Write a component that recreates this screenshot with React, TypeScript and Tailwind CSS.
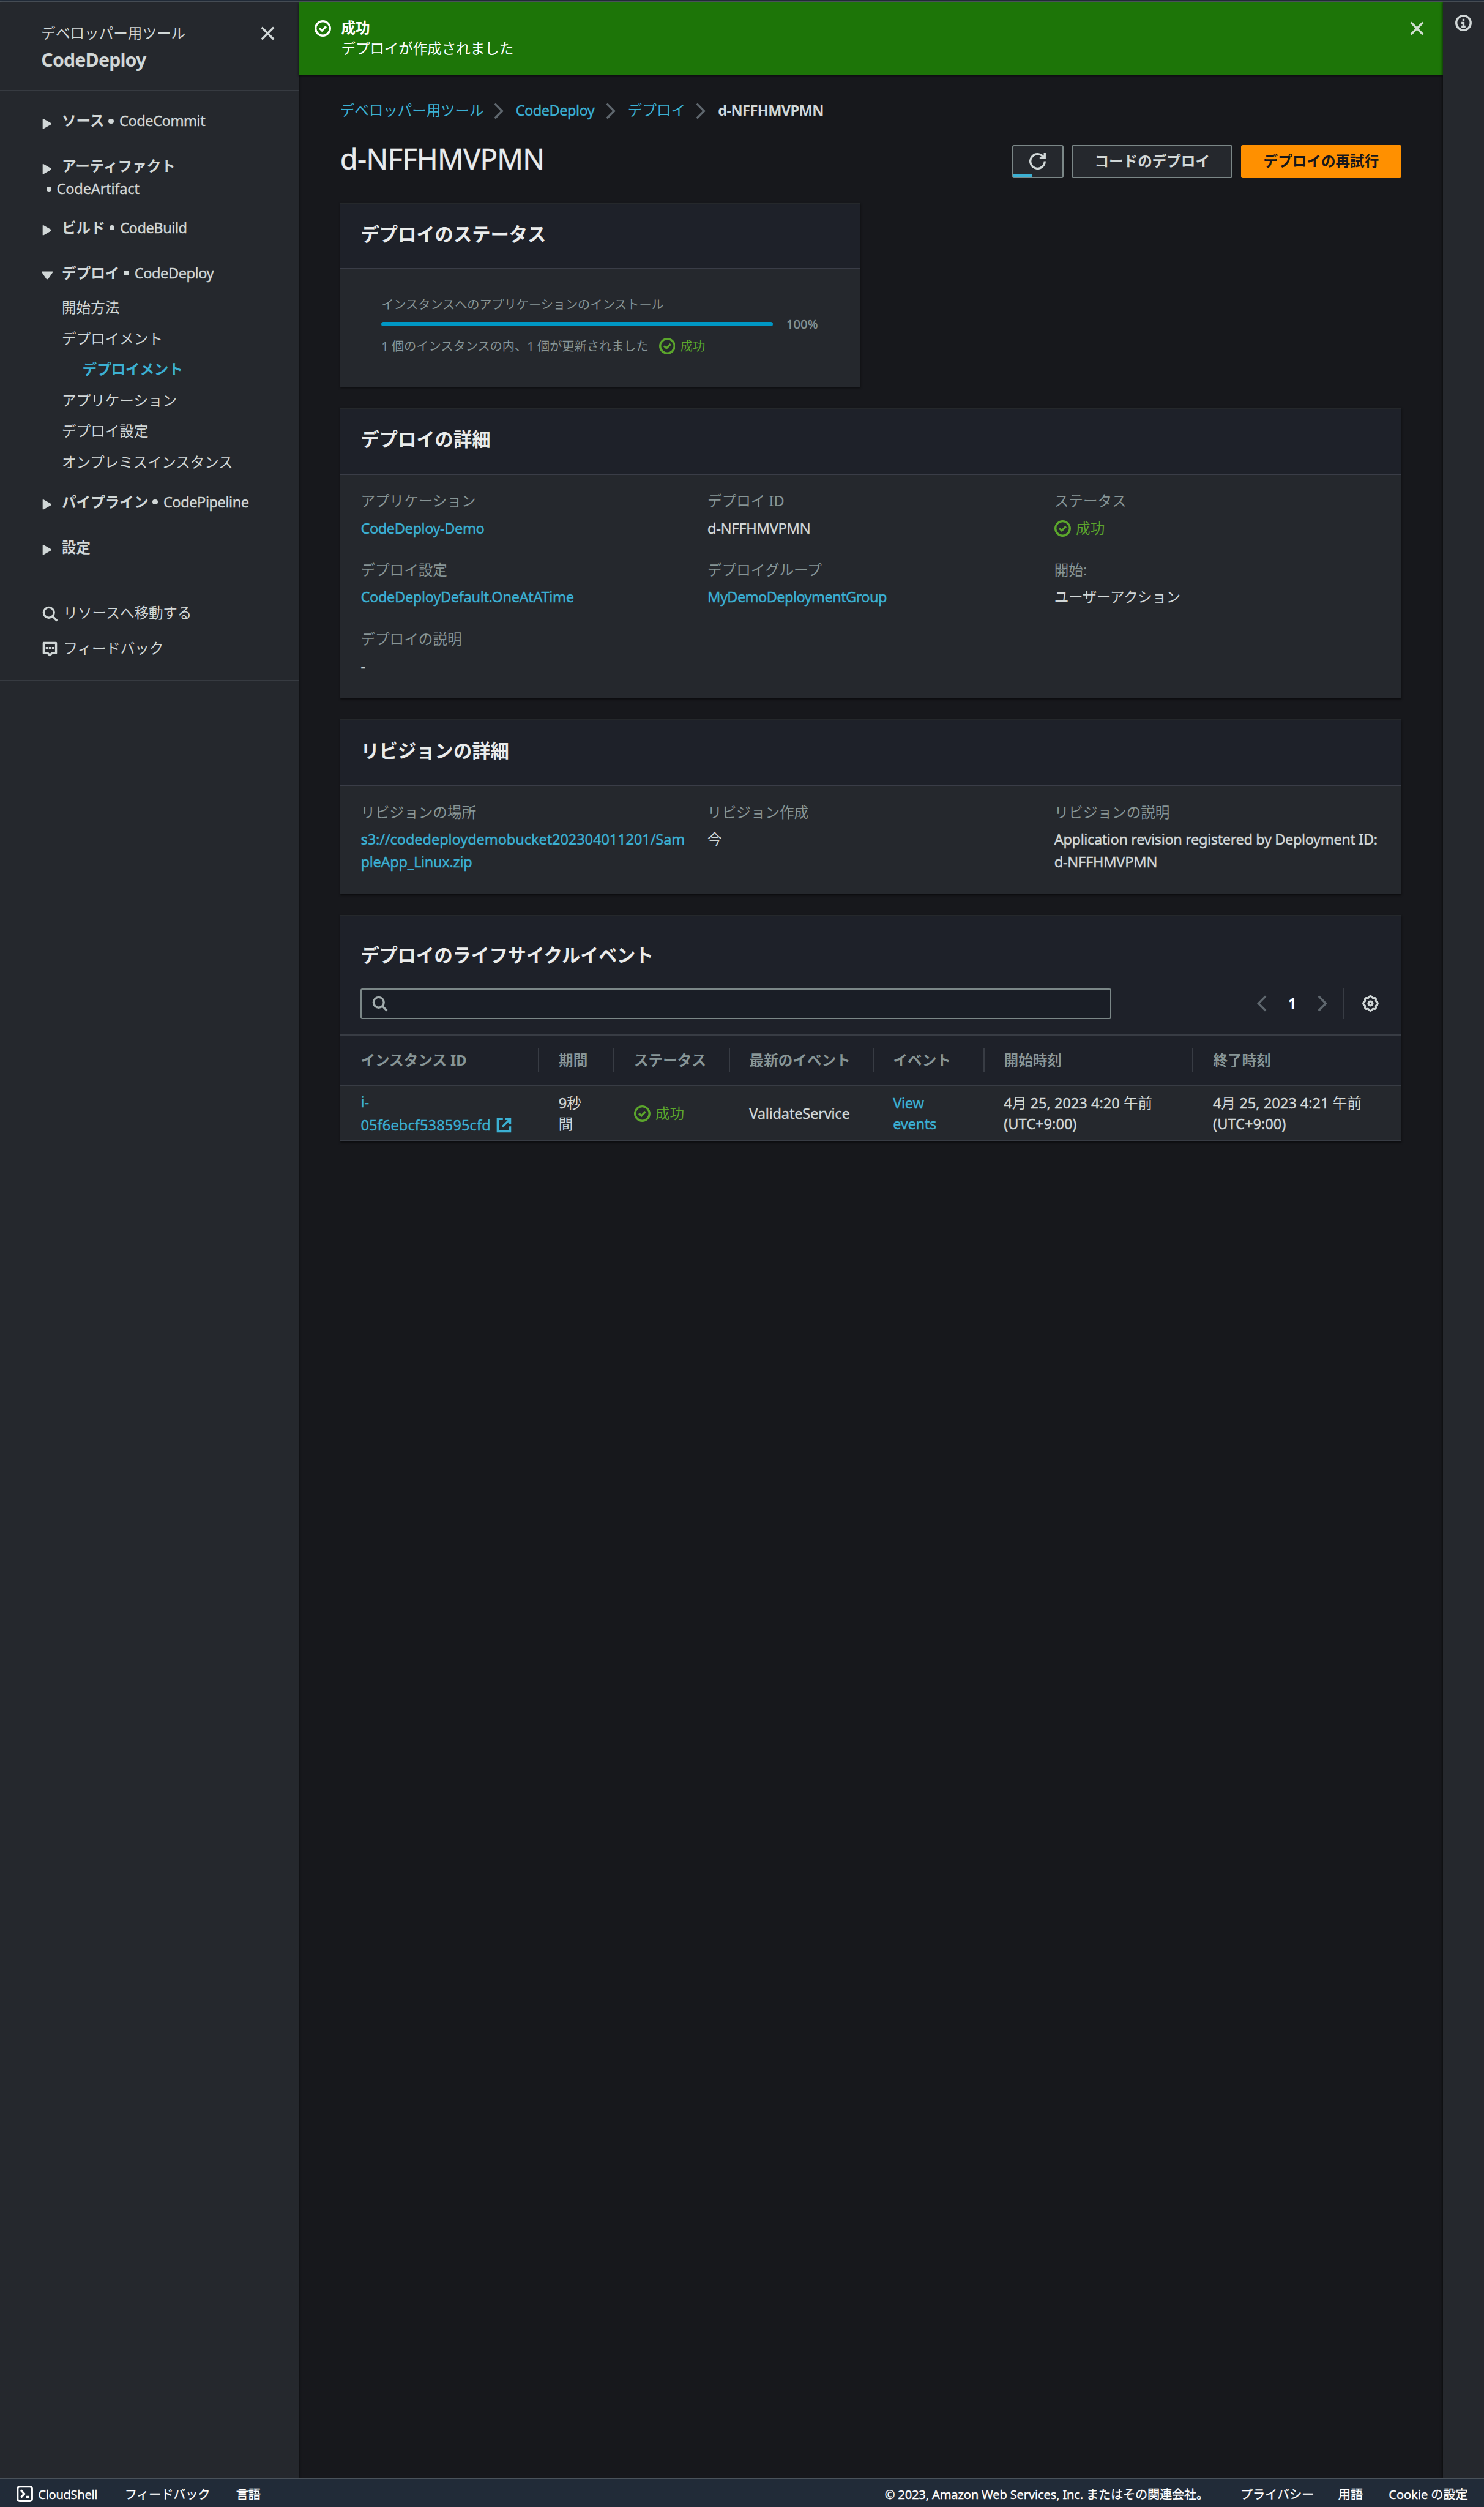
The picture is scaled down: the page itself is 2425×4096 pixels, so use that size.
import React from "react";

type IconProps = { className?: string; children?: React.ReactNode };

function Icon({ className = "", children }: IconProps) {
  return (
    <svg viewBox="0 0 16 16" className={"size-32 shrink-0 " + className} fill="none" stroke="currentColor" strokeWidth="2">
      {children}
    </svg>
  );
}

const CheckIcon = ({ className = "" }: IconProps) => (
  <Icon className={className}>
    <circle cx="8" cy="8" r="7" />
    <path d="M4.8 7.8l2.4 2.3L11.2 6" />
  </Icon>
);

const CloseIcon = ({ className = "" }: IconProps) => (
  <Icon className={className}>
    <path d="M2.2 2.2l11.6 11.6M13.8 2.2L2.2 13.8" />
  </Icon>
);

const SearchIcon = ({ className = "" }: IconProps) => (
  <Icon className={className}>
    <circle cx="7" cy="7" r="5" />
    <path d="M15 15l-4.5-4.5" />
  </Icon>
);

const ChevronIcon = ({ className = "" }: IconProps) => (
  <Icon className={className}>
    <path d="M4 1l7 7-7 7" />
  </Icon>
);

const gearPath =
  Array.from({ length: 96 }, (_, i) => {
    const a = (i / 96) * Math.PI * 2;
    const r = 6.4 + 0.65 * Math.cos(8 * a);
    return `${i ? "L" : "M"}${(8 + r * Math.cos(a)).toFixed(2)} ${(8 + r * Math.sin(a)).toFixed(2)}`;
  }).join("") + "Z";

function Caret({ open = false }: { open?: boolean }) {
  return (
    <svg viewBox="0 0 22 22" className="size-22 shrink-0" fill="currentColor" stroke="currentColor" strokeWidth="2" strokeLinejoin="round">
      {open ? <path d="M1 4h20l-9 13h-2z" /> : <path d="M3 2l14 8v2L3 20z" />}
    </svg>
  );
}

function Latin({ className = "", children }: { className?: string; children: React.ReactNode }) {
  return <span className={"[-webkit-text-stroke:0.4px_currentColor] " + className}>{children}</span>;
}

function Category({ jp, en, open, className = "" }: { jp: string; en?: string; open?: boolean; className?: string }) {
  return (
    <div className={"flex h-44 items-center leading-44 " + className}>
      <span className="mt-10 flex w-39">
        <Caret open={open} />
      </span>
      <span className="font-bold">{jp}</span>
      {en && (
        <span className="flex items-center">
          <i className="mr-11 ml-8 size-10 rounded-full bg-current" />
          <Latin className="tracking-[-0.45px]">{en}</Latin>
        </span>
      )}
    </div>
  );
}

function Sidebar() {
  return (
    <aside className="w-580 shrink-0 bg-[#25282d] text-[23.58px] text-[#d1d7d7] shadow-[2px_0_3px_rgba(0,0,0,0.4)]">
      <div className="flex h-172 justify-between border-b-2 border-[#373b41] pt-40 pl-80 pr-44">
        <div>
          <div className="leading-40">デベロッパー用ツール</div>
          <div className="mt-9 text-[30.3px] leading-44 font-bold tracking-[-0.85px]">CodeDeploy</div>
        </div>
        <CloseIcon className="mt-4" />
      </div>
      <nav className="border-b-2 border-[#373b41] pt-36 pl-81 pb-40">
        <Category jp="ソース" en="CodeCommit" />
        <Category jp="アーティファクト" className="mt-44" />
        <div className="flex h-44 items-center">
          <i className="mr-10 ml-9 size-10 rounded-full bg-current" />
          <Latin className="tracking-[-0.2px]">CodeArtifact</Latin>
        </div>
        <Category jp="ビルド" en="CodeBuild" className="mt-31" />
        <Category jp="デプロイ" en="CodeDeploy" open className="mt-44" />
        <ul className="mt-23 flex flex-col gap-16 pl-39 leading-44">
          <li>開始方法</li>
          <li>デプロイメント</li>
          <li className="pl-40 font-bold tracking-[-0.15px] text-[#3bb0d3]">デプロイメント</li>
          <li>アプリケーション</li>
          <li>デプロイ設定</li>
          <li className="tracking-[-0.15px]">オンプレミスインスタンス</li>
        </ul>
        <Category jp="パイプライン" en="CodePipeline" className="mt-33" />
        <Category jp="設定" className="mt-44" />
        <div className="mt-83 flex h-44 items-center gap-10 leading-44">
          <SearchIcon className="mt-3" />
          <span className="tracking-[-0.15px]">リソースへ移動する</span>
        </div>
        <div className="mt-25 flex h-44 items-center gap-10 leading-44">
          <Icon className="mt-2">
            <path d="M2 2h12v10h-4l-2 2-2-2H2z" strokeLinejoin="round" />
            <path d="M4 7h2M7 7h2M10 7h2" />
          </Icon>
          <span className="tracking-[-0.15px]">フィードバック</span>
        </div>
      </nav>
    </aside>
  );
}

function Card({ title, className = "", children }: { title: string; className?: string; children: React.ReactNode }) {
  return (
    <section className={"bg-[#25282d] shadow-[0_2px_3px_rgba(0,0,0,0.5)] " + className}>
      <h2 className="h-130 border-t-2 border-b-2 border-t-[#25282b] border-b-[#3a3d47] bg-[#1e2129] pt-37 pl-40 text-[30.3px] leading-44 font-bold text-[#e9ebeb]">
        {title}
      </h2>
      {children}
    </section>
  );
}

function Field({ label, children }: { label: string; children: React.ReactNode }) {
  return (
    <div className="min-w-0 leading-44">
      <div className="text-[#879596]">{label}</div>
      <div className="mt-9">{children}</div>
    </div>
  );
}

const Success = () => (
  <span className="flex items-center gap-10 text-[#5ba62c]">
    <CheckIcon />
    成功
  </span>
);

function Lifecycle() {
  const cols = "grid grid-cols-[384fr_146fr_224fr_279fr_215fr_406fr_406fr]";
  const heads = ["インスタンス ID", "期間", "ステータス", "最新のイベント", "イベント", "開始時刻", "終了時刻"];
  return (
    <section className="mt-40 h-440 bg-[#1e2129] shadow-[0_2px_3px_rgba(0,0,0,0.5)]">
      <div className="h-234 border-t-2 border-b-2 border-t-[#25282b] border-b-[#383c44] px-40 pt-54">
        <h2 className="text-[30.3px] leading-44 font-bold tracking-[-0.3px] text-[#e9ebeb]">デプロイのライフサイクルイベント</h2>
        <div className="mt-42 flex h-60 items-center">
          <div className="flex h-60 w-1456 items-center rounded-[3px] border-2 border-[#7b8787] bg-[#1a1e26] pl-18 text-[#a3adae]">
            <SearchIcon />
          </div>
          <div className="ml-276 flex items-center text-[#5f676e]">
            <ChevronIcon className="rotate-180" />
            <span className="w-87 text-center font-bold text-white">1</span>
            <ChevronIcon />
          </div>
          <div className="ml-24 h-60 w-[2px] bg-[#383c44]" />
          <Icon className="ml-34 text-[#d1d7d7]">
            <path d={gearPath} strokeWidth="1.8" />
            <circle cx="8" cy="8" r="2" />
          </Icon>
        </div>
      </div>
      <div className={cols + " h-98 items-center border-b-2 border-[#383c44] font-bold text-[#879596]"}>
        {heads.map((h, i) => (
          <div key={h} className={i ? "h-48 border-l-2 border-[#383c44] pl-38 leading-48" : "pl-40 leading-48"}>
            {h}
          </div>
        ))}
      </div>
      <div className={cols + " h-108 items-center border-b-2 border-[#383c44] bg-[#25282d] pt-2 leading-40 text-[#d1d7d7]"}>
        <div className="pl-40 leading-44 text-[#3bb0d3]">
          <Latin>i-</Latin>
          <div className="flex items-center gap-10">
            <Latin className="tracking-[0.1px]">05f6ebcf538595cfd</Latin>
            <Icon>
              <path d="M14 9v5H2V2h5M9.5 2H14v4.5M14 2L6.5 9.5" />
            </Icon>
          </div>
        </div>
        <div className="pl-40">
          <Latin>9</Latin>秒
          <br />間
        </div>
        <div className="pl-40">
          <Success />
        </div>
        <div className="pl-40">
          <Latin className="tracking-[-0.2px]">ValidateService</Latin>
        </div>
        <div className="pl-40 text-[#3bb0d3]">
          <Latin className="tracking-[-0.3px]">
            View
            <br />
            events
          </Latin>
        </div>
        <div className="pl-40">
          <Latin>4</Latin>月 <Latin>25, 2023 4:20</Latin> 午前
          <br />
          <Latin>(UTC+9:00)</Latin>
        </div>
        <div className="pl-40">
          <Latin>4</Latin>月 <Latin>25, 2023 4:21</Latin> 午前
          <br />
          <Latin>(UTC+9:00)</Latin>
        </div>
      </div>
    </section>
  );
}

function Main() {
  return (
    <main className="min-w-0 flex-1 text-[23.58px] text-[#d1d7d7]">
      <div className="flex h-140 bg-[#1d7508] pt-30 pr-34 pl-30 text-white shadow-[0_2px_3px_rgba(0,0,0,0.6)]">
        <CheckIcon className="mt-4" />
        <div className="ml-20 flex-1 leading-40">
          <div className="font-bold">成功</div>
          <div className="tracking-[-0.1px]">デプロイが作成されました</div>
        </div>
        <CloseIcon className="mt-4 text-[#d1dfd0]" />
      </div>
      <div className="px-80">
        <div className="flex items-center pt-50 leading-40 text-[#3bb0d3]">
          <span className="tracking-[-0.1px]">デベロッパー用ツール</span>
          <ChevronIcon className="mr-17 ml-13 text-[#5f676e]" />
          <Latin className="tracking-[-0.55px]">CodeDeploy</Latin>
          <ChevronIcon className="mr-17 ml-16 text-[#5f676e]" />
          <span>デプロイ</span>
          <ChevronIcon className="mr-17 ml-14 text-[#5f676e]" />
          <span className="font-bold tracking-[-0.6px] text-[#d1d7d7]">d-NFFHMVPMN</span>
        </div>
        <div className="mt-46 flex h-64 items-start gap-16 font-bold">
          <h1 className="mt-2 flex-1 text-[47.2px] leading-52 font-normal tracking-[-0.8px] text-[#e9ebeb] [-webkit-text-stroke:0.4px_currentColor]">
            d-NFFHMVPMN
          </h1>
          <div className="relative flex h-64 w-100 items-center justify-center rounded-[3px] border-2 border-[#7b8787] bg-[#25282d]">
            <Icon>
              <path d="M10 5h5V0M15 8a7 7 0 1 1-.7-3" />
            </Icon>
            <span className="absolute bottom-0 left-0 h-4 w-36 bg-[#3bb0d3]" />
          </div>
          <div className="flex h-64 w-312 items-center justify-center rounded-[3px] border-2 border-[#7b8787] bg-[#25282d]">
            コードのデプロイ
          </div>
          <div className="flex h-64 w-312 items-center justify-center rounded-[3px] bg-[#ff9000] text-[#16171b]">
            デプロイの再試行
          </div>
        </div>

        <Card title="デプロイのステータス" className="mt-48 h-358 w-1010">
          <div className="px-80 pt-50 text-[20.21px] text-[#879596]">
            <div className="leading-36 tracking-[-0.05px]">インスタンスへのアプリケーションのインストール</div>
            <div className="flex h-40 items-center gap-26">
              <div className="h-8 w-760 rounded-full bg-[#0097c4]" />
              <Latin>100%</Latin>
            </div>
            <div className="flex h-44 items-center gap-20">
              <span>1 個のインスタンスの内、1 個が更新されました</span>
              <Success />
            </div>
          </div>
        </Card>

        <Card title="デプロイの詳細" className="mt-40 h-564">
          <div className="grid grid-cols-[673fr_673fr_634fr] gap-y-37 px-40 pt-29">
            <Field label="アプリケーション">
              <Latin className="tracking-[-0.42px] text-[#3bb0d3]">CodeDeploy-Demo</Latin>
            </Field>
            <Field label="デプロイ ID">
              <Latin className="tracking-[-0.25px]">d-NFFHMVPMN</Latin>
            </Field>
            <Field label="ステータス">
              <Success />
            </Field>
            <Field label="デプロイ設定">
              <Latin className="tracking-[-0.34px] text-[#3bb0d3]">CodeDeployDefault.OneAtATime</Latin>
            </Field>
            <Field label="デプロイグループ">
              <Latin className="tracking-[-0.6px] text-[#3bb0d3]">MyDemoDeploymentGroup</Latin>
            </Field>
            <Field label="開始:">
              <span className="tracking-[-0.4px]">ユーザーアクション</span>
            </Field>
            <Field label="デプロイの説明">
              <Latin>-</Latin>
            </Field>
          </div>
        </Card>

        <Card title="リビジョンの詳細" className="mt-40 h-340">
          <div className="grid grid-cols-[673fr_673fr_634fr] px-40 pt-29">
            <Field label="リビジョンの場所">
              <div className="whitespace-nowrap text-[#3bb0d3]">
                <Latin className="tracking-[-0.1px]">s3://codedeploydemobucket202304011201/Sam</Latin>
                <br />
                <Latin className="tracking-[-0.28px]">pleApp_Linux.zip</Latin>
              </div>
            </Field>
            <Field label="リビジョン作成">今</Field>
            <Field label="リビジョンの説明">
              <Latin className="tracking-[-0.4px] whitespace-nowrap">Application revision registered by Deployment ID:</Latin>
              <br />
              <Latin className="tracking-[-0.25px]">d-NFFHMVPMN</Latin>
            </Field>
          </div>
        </Card>

        <Lifecycle />
      </div>
    </main>
  );
}

export default function App() {
  return (
    <div
      lang="ja"
      className="flex h-[4096px] w-[2425px] flex-col overflow-hidden bg-[#17181c] font-['Noto_Sans','Noto_Sans_CJK_JP',sans-serif] [--spacing:0.8421px]"
    >
      <div className="h-5 shrink-0 border-b-2 border-[#4a525a] bg-[#212b38]" />
      <div className="flex min-h-0 flex-1">
        <Sidebar />
        <Main />
        <div className="flex w-80 shrink-0 justify-center bg-[#25282d] pt-24 text-[#d1d7d7] shadow-[-2px_0_3px_rgba(0,0,0,0.4)]">
          <Icon>
            <circle cx="8" cy="8" r="7" />
            <path d="M8 12V8H6M10 11.5H6M8 6V4" />
          </Icon>
        </div>
      </div>
      <footer className="flex h-57 shrink-0 items-center border-t-2 border-[#4a525a] bg-[#212b38] pt-6 pl-32 text-[20.21px] leading-40 whitespace-nowrap text-white [-webkit-text-stroke:0.3px_currentColor]">
        <Icon className="-mt-2">
          <rect x="1" y="1" width="14" height="14" rx="2" />
          <path d="M4.3 4.5L7.5 8l-3.2 3.5M9 11h3.5" />
        </Icon>
        <span className="ml-10 w-168 tracking-[-0.35px]">CloudShell</span>
        <span className="w-216 tracking-[-0.2px]">フィードバック</span>
        <span>言語</span>
        <span className="ml-auto w-690 tracking-[-0.2px]">© 2023, Amazon Web Services, Inc. またはその関連会社。</span>
        <span className="w-190">プライバシー</span>
        <span className="w-98">用語</span>
        <span className="w-185 tracking-[-0.1px]">Cookie の設定</span>
      </footer>
    </div>
  );
}
